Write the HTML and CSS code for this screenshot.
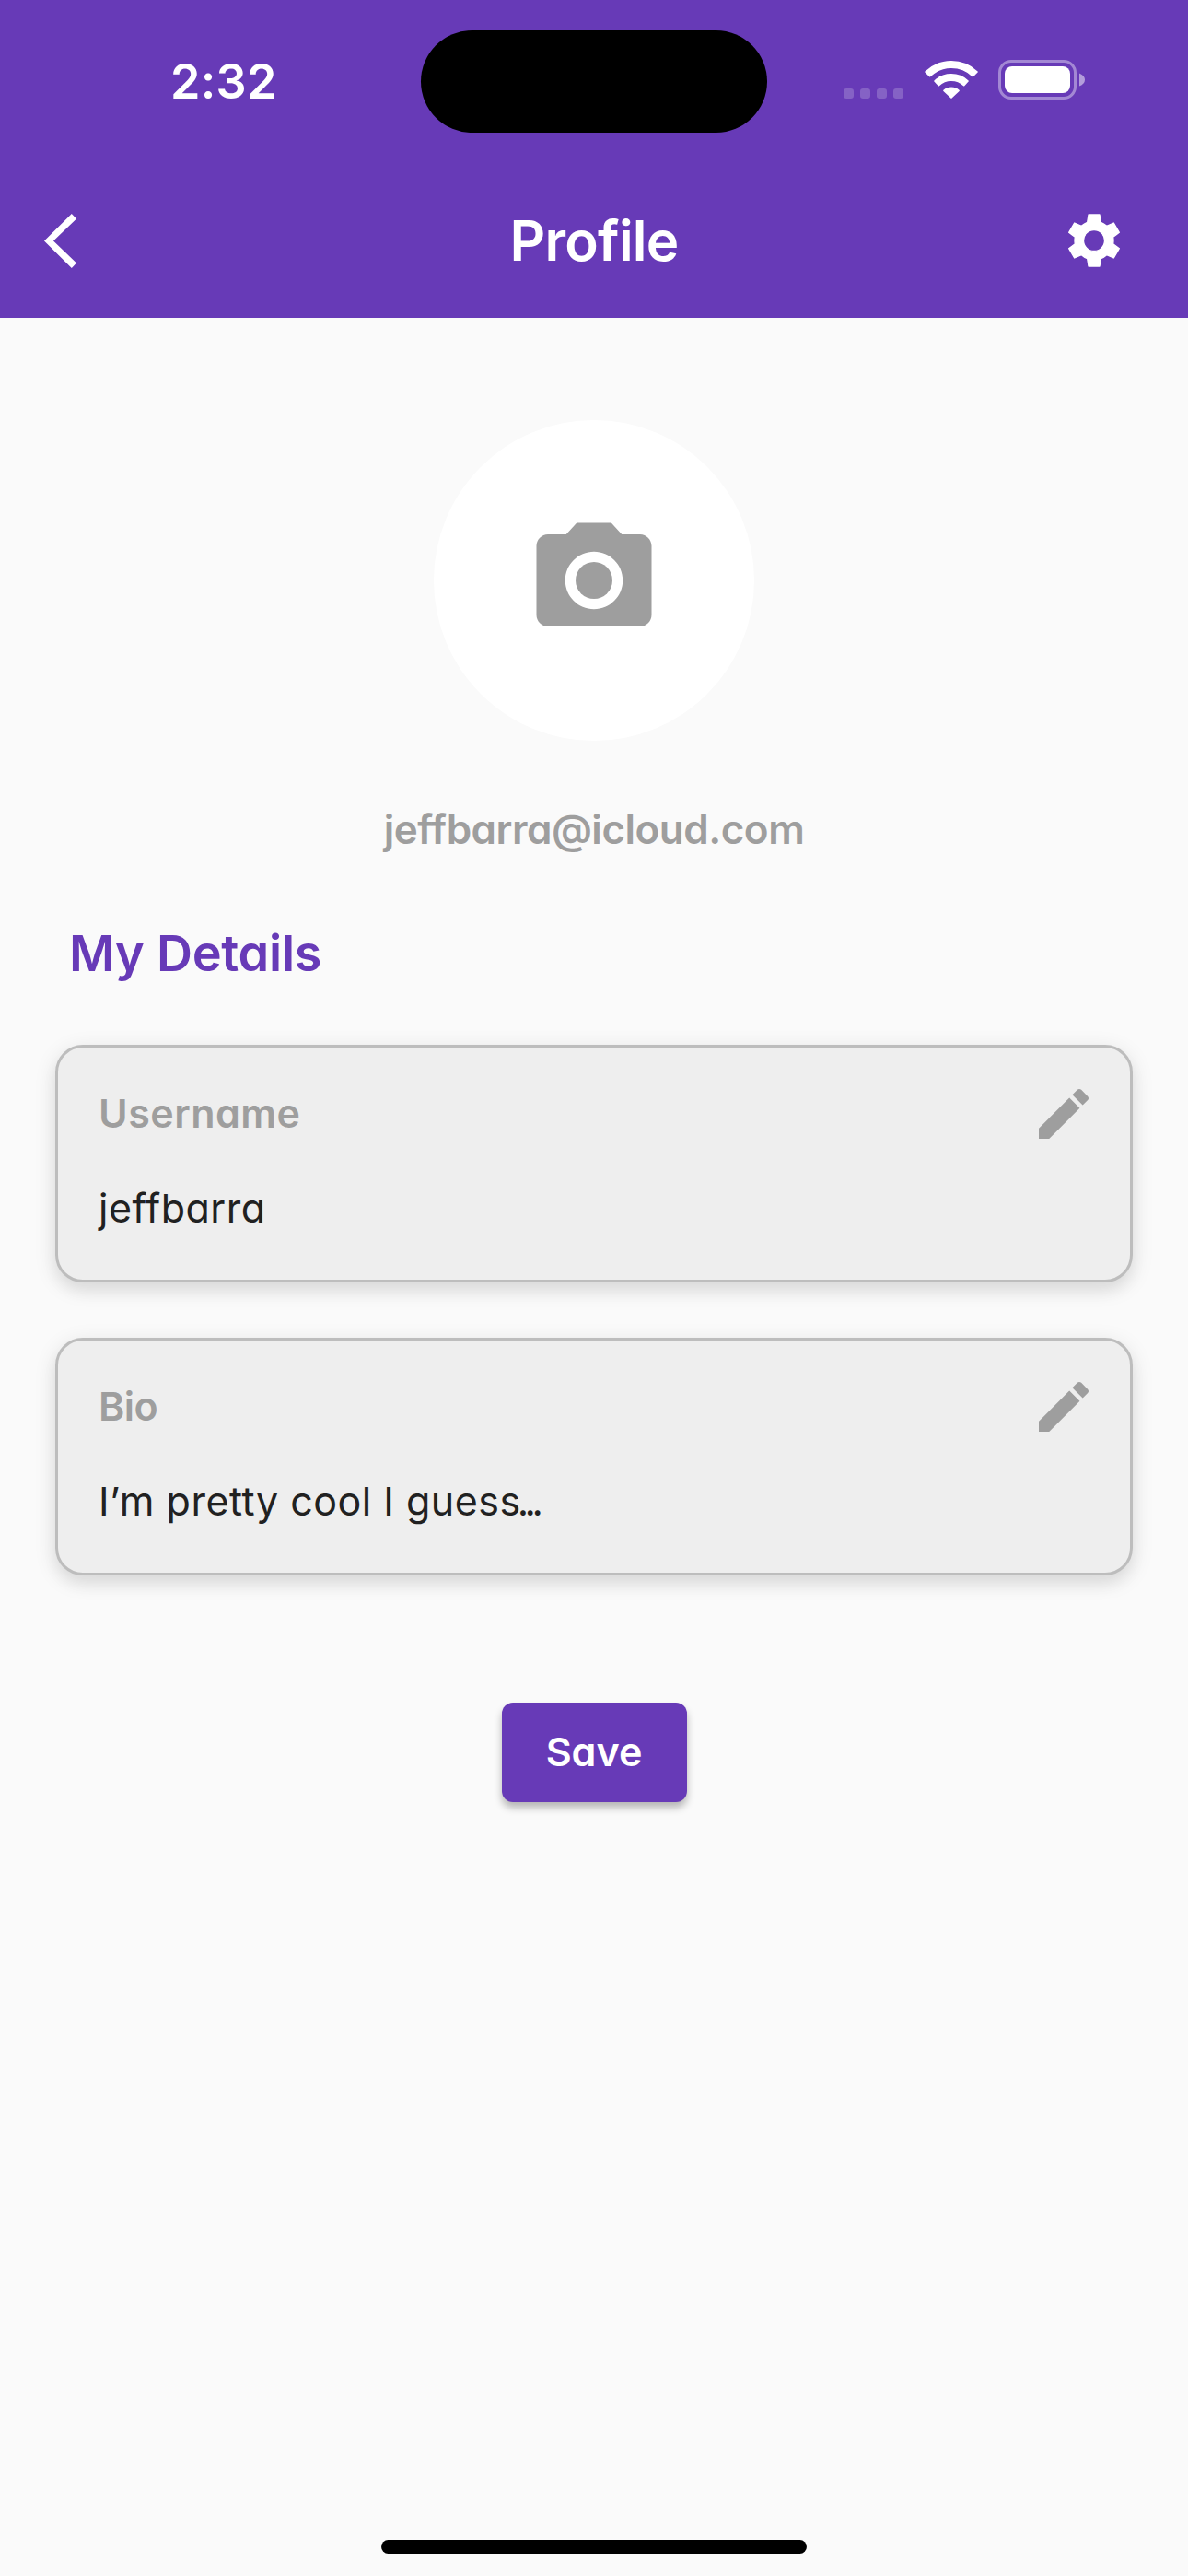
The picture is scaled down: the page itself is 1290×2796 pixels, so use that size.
FILE: index.html
```html
<!DOCTYPE html>
<html lang="en">
<head>
<meta charset="utf-8">
<title>Profile</title>
<link rel="stylesheet" href="styles.css">
</head>
<body>
<header class="header">
  <div class="status">
    <span class="time">2:32</span>
    <span class="island"></span>
    <span class="indicators">
      <svg class="dots" viewBox="0 0 65 11"><rect width="11" height="11" rx="3.2"/><rect x="18" width="11" height="11" rx="3.2"/><rect x="36" width="11" height="11" rx="3.2"/><rect x="54" width="11" height="11" rx="3.2"/></svg>
      <svg class="wifi" viewBox="-87 -126 174 126"><path d="M-84 -87A122 122 0 0 1 84 -87L70 -73A101 101 0 0 0 -70 -73ZM-54 -57A79 79 0 0 1 54 -57L41 -43A59 59 0 0 0 -41 -43ZM-24 -26A36 36 0 0 1 24 -26L0 -3Z"/></svg>
      <svg class="battery" viewBox="0 0 94 43"><rect class="shell" x="1.5" y="1.5" width="82" height="40" rx="12.5"/><rect x="7" y="7" width="71" height="29" rx="8"/><path class="nub" d="M88 14.5Q94 17 94 21.5T88 28.5Z"/></svg>
    </span>
  </div>
  <nav class="appbar">
    <svg class="back" viewBox="0 0 35 59"><path d="M29.8 0L35 5.4L10 29.5L35 53.6L29.8 59L0 29.5Z"/></svg>
    <h1 class="title">Profile</h1>
    <svg class="gear" viewBox="36 45 216 216"><path fill-rule="evenodd" d="M126 69H162L166 94Q176 98 185 106L208 96L226 127L206 142Q208 153 206 164L226 179L208 210L185 200Q176 208 166 212L162 237H126L122 212Q112 208 103 200L80 210L62 179L82 164Q80 153 82 142L62 127L80 96L103 106Q112 98 122 94ZM144 118.500A34.500 34.500 0 1 0 144 187.500A34.500 34.500 0 1 0 144 118.500Z"/></svg>
  </nav>
</header>
<main class="content">
  <div class="avatar">
    <svg viewBox="0 0 24 24"><circle cx="12" cy="12" r="3.200"/><path d="M9 2L7.170 4H4c-1.100 0-2 .9-2 2v12c0 1.100.9 2 2 2h16c1.100 0 2-.9 2-2V6c0-1.100-.9-2-2-2h-3.170L15 2H9zm3 15c-2.760 0-5-2.240-5-5s2.240-5 5-5 5 2.240 5 5-2.240 5-5 5z"/></svg>
  </div>
  <p class="email">jeffbarra@icloud.com</p>
  <h2 class="section">My Details</h2>
  <section class="card">
    <div class="card-head"><span class="label">Username</span>
      <svg class="edit" viewBox="0 0 24 24"><path d="M3 17.250V21h3.750L17.810 9.940l-3.750-3.750L3 17.250zM20.710 7.040c.39-.39.39-1.020 0-1.410l-2.340-2.340c-.39-.39-1.020-.39-1.410 0l-1.830 1.830 3.750 3.750 1.830-1.830z"/></svg></div>
    <p class="value">jeffbarra</p>
  </section>
  <section class="card">
    <div class="card-head"><span class="label short">Bio</span>
      <svg class="edit" viewBox="0 0 24 24"><path d="M3 17.250V21h3.750L17.810 9.940l-3.750-3.750L3 17.250zM20.710 7.040c.39-.39.39-1.020 0-1.410l-2.340-2.340c-.39-.39-1.020-.39-1.410 0l-1.830 1.830 3.750 3.750 1.830-1.830z"/></svg></div>
    <p class="value">I’m pretty cool I guess<span class="ellipsis">...</span></p>
  </section>
  <button class="save">Save</button>
</main>
<div class="home"></div>
</body>
</html>
```
FILE: styles.css
```css
* { box-sizing: border-box; margin: 0; padding: 0; }
body {
  width: 1290px;
  height: 2796px;
  display: flex;
  flex-direction: column;
  background: #fafafa;
  font-family: Inter, "Open Sans", sans-serif;
  font-feature-settings: "cv11";
}
svg { display: block; fill: currentColor; }

.header { height: 345px; background: #673ab7; color: #fff; }
.status { display: grid; grid-template-columns: 457px 376px 457px; height: 177px; }
.time { padding-left: 185px; font-size: 52px; font-weight: 600; line-height: 177px; letter-spacing: .3px; }
.island { height: 111px; margin-top: 33px; border-radius: 56px; background: #000; }
.indicators { display: flex; align-items: flex-start; padding: 65px 0 0 83px; }
.dots { width: 65px; height: 11px; margin-top: 31px; opacity: .2; }
.wifi { width: 58px; height: 42px; margin-left: 22.500px; stroke: currentColor; stroke-width: 5; stroke-linejoin: round; }
.battery { width: 94px; height: 43px; margin-left: 22.500px; }
.shell { fill: none; stroke: #fff; stroke-width: 3; opacity: .4; }
.nub { opacity: .5; }

.appbar { display: flex; align-items: center; justify-content: space-between; height: 168px; padding: 0 66px 0 48px; }
.back { width: 35px; height: 59px; }
.title { margin-left: 55px; font-size: 60px; font-weight: 600; letter-spacing: -.75px; }
.gear { width: 72px; height: 72px; }
.gear path { stroke: currentColor; stroke-width: 4; stroke-linejoin: round; }

.content { display: flex; flex-direction: column; align-items: center; padding-top: 111px; }
.avatar { display: grid; place-items: center; width: 348px; height: 348px; border-radius: 50%; background: #fff; color: #9e9e9e; }
.avatar svg { width: 150px; height: 150px; }
.email { margin-top: 66px; font-size: 44px; font-weight: 600; line-height: 60px; letter-spacing: -.5px; color: #9e9e9e; }
.section { align-self: flex-start; margin: 65px 0 59px 75px; font-size: 54px; font-weight: 600; line-height: 80px; letter-spacing: -.25px; color: #673ab7; }
.card {
  width: 1170px;
  height: 258px;
  margin-bottom: 60px;
  padding: 36px 36px 0 44px;
  border: 3px solid #bdbdbd;
  border-radius: 30px;
  background: #eee;
  box-shadow: 0 6px 24px rgba(0, 0, 0, .11), 0 10px 16px rgba(0, 0, 0, .05);
}
.card-head { display: flex; align-items: center; justify-content: space-between; height: 72px; color: #9e9e9e; }
.label { padding-bottom: 2px; font-size: 43px; font-weight: 600; letter-spacing: .5px; }
.label.short { letter-spacing: -.5px; }
.edit { width: 72px; height: 72px; }
.value { margin-top: 34px; font-size: 43px; line-height: 64px; letter-spacing: .5px; color: #212121; }
.ellipsis { margin-left: -4px; letter-spacing: -4.500px; }
.save {
  width: 201px;
  height: 108px;
  margin-top: 78px;
  padding-bottom: 2px;
  border: 0;
  border-radius: 12px;
  background: #673ab7;
  color: #fff;
  font-family: inherit;
  font-feature-settings: inherit;
  font-size: 43px;
  font-weight: 600;
  box-shadow: 0 6px 9px rgba(0, 0, 0, .28);
}
.home { width: 462px; height: 15px; margin: auto auto 24px; border-radius: 8px; background: #000; }
```
